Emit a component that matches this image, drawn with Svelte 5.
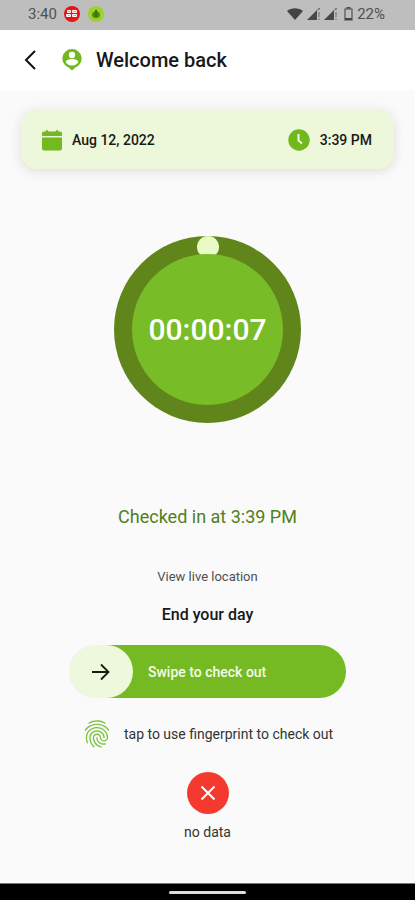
<script>
  const date = 'Aug 12, 2022';
  const time = '3:39 PM';
  const elapsed = '00:00:07';
</script>

<div class="screen">
  <div class="status">
    <span>3:40</span>
    <svg class="news" width="16" height="16" viewBox="0 0 16 16" aria-hidden="true">
      <circle cx="8" cy="8" r="8" fill="#ec1018" />
      <g fill="#fff"><rect x="3" y="4" width="4" height="3" rx="1" /><rect x="8" y="4" width="5" height="3" rx="1" /><rect x="2" y="8" width="5" height="3" rx="1" /><rect x="8" y="8" width="5" height="3" rx="1" /></g>
      <path d="M4 5.5h2M9.5 5.5H12M4 9.5h1.500M9.500 9.500H12" stroke="#ec1018" stroke-width=".5" />
    </svg>
    <svg width="16" height="16" viewBox="0 0 16 16" aria-hidden="true">
      <circle cx="8" cy="8" r="8" fill="#9bd329" />
      <path d="M8 3.200 9.500 6h-3z" fill="#354d18" />
      <ellipse cx="8" cy="8.800" rx="4" ry="3.200" fill="#4d8718" />
      <path d="M8 5v6" stroke="#315d13" />
    </svg>
    <svg class="wifi" width="16" height="12" viewBox="0 0 16 12" aria-hidden="true"><path d="M0 3C4.500-.8 11.500-.8 16 3L8 12z" fill="#444" /></svg>
    {#each [0, 1] as slot (slot)}
      <svg class="signal" width="13" height="13" viewBox="0 0 13 13" aria-hidden="true">
        <path d="M0 13 10 3v10z" fill="#484848" /><path d="M10 3.500 12.500 1M12 1v2m0 2v5m0 1.500V13" fill="none" stroke="#666" />
      </svg>
    {/each}
    <svg class="battery" width="9" height="14" viewBox="0 0 9 14" aria-hidden="true">
      <path d="M3 2V.7h3V2M1 2h7v11H1z" fill="none" stroke="#505050" stroke-width="1.200" /><path d="M1 11h7v2H1z" fill="#444" />
    </svg>
    <span>22%</span>
  </div>

  <header>
    <button class="back" aria-label="Back">
      <svg width="12" height="20" viewBox="0 0 12 20" aria-hidden="true"><path d="M11 1 2 10l9 9" fill="none" stroke="#111" stroke-width="2" /></svg>
    </button>
    <svg width="20" height="22" viewBox="0 0 20 22" aria-hidden="true">
      <path d="M10 0a9.500 9.500 0 0 0-3.400 18.400L10 21.500l3.400-3.100A9.500 9.500 0 0 0 10 0z" fill="#70b91e" />
      <circle cx="10" cy="6" r="3.200" fill="#fff" />
      <path d="M3.800 13.400c0-2.400 3.500-3.400 6.200-3.400s6.200 1 6.200 3.400C14.800 15.500 12.500 16.500 10 16.500s-4.800-1-6.200-3.100z" fill="#fff" />
    </svg>
    <h1>Welcome back</h1>
  </header>

  <main>
    <section class="card">
      <div class="fact">
        <svg width="20" height="22" viewBox="0 0 20 22" aria-hidden="true">
          <path d="M0 7V4.500Q0 2.500 2 2.500h1.500L5 .5l1.500 2h7l1.500-2 1.500 2H18q2 0 2 2V7zM0 8.500h20v11q0 2-2 2H2q-2 0-2-2z" fill="#72ba20" />
        </svg>
        <span>{date}</span>
      </div>
      <div class="fact">
        <svg width="22" height="22" viewBox="0 0 22 22" aria-hidden="true">
          <circle cx="11" cy="11" r="10.700" fill="#70b91d" /><path d="M10.500 5v6.500l3.500 3" fill="none" stroke="#f1fadf" stroke-width="2" />
        </svg>
        <span>{time}</span>
      </div>
    </section>

    <div class="timer">
      <i class="knob"></i>
      <div class="dial">{elapsed}</div>
    </div>

    <p class="checked">Checked in at {time}</p>
    <a class="live" href="#live">View live location</a>
    <h2>End your day</h2>

    <button class="swipe">
      <span class="thumb">
        <svg width="18" height="18" viewBox="0 0 18 18" aria-hidden="true"><path d="M0 9h16.500M9 1.500 16.500 9 9 16.500" fill="none" stroke="#151b10" stroke-width="1.800" /></svg>
      </span>
      <span>Swipe to check out</span>
    </button>

    <button class="finger">
      <svg width="30" height="32" viewBox="1 1 22 22" fill="#7fc242" aria-hidden="true">
        <path d="M17.810 4.470c-.08 0-.16-.02-.23-.06C15.660 3.420 14 3 12.010 3c-1.980 0-3.860.47-5.570 1.410-.24.13-.54.04-.68-.2-.13-.24-.04-.55.2-.68C7.820 2.520 9.860 2 12.010 2c2.130 0 3.990.47 6.030 1.520.25.13.34.43.21.67-.09.18-.26.28-.44.28z" />
        <path d="M3.500 9.720c-.1 0-.2-.03-.29-.09-.23-.16-.28-.47-.12-.7.99-1.400 2.250-2.500 3.750-3.270C9.980 4.040 14 4.030 17.150 5.650c1.500.77 2.760 1.860 3.750 3.250.16.22.11.54-.12.7-.23.16-.54.11-.7-.12-.9-1.260-2.040-2.250-3.390-2.940-2.870-1.470-6.540-1.470-9.400.01-1.360.7-2.500 1.700-3.400 2.960-.08.14-.23.21-.39.21z" />
        <path d="M9.750 21.790c-.13 0-.26-.05-.35-.15-.87-.87-1.340-1.430-2.010-2.640-.69-1.230-1.050-2.730-1.050-4.340 0-2.970 2.540-5.390 5.660-5.390s5.660 2.420 5.660 5.390c0 .28-.22.5-.5.5s-.5-.22-.5-.5c0-2.420-2.090-4.390-4.660-4.390-2.570 0-4.660 1.970-4.660 4.390 0 1.440.32 2.770.93 3.850.64 1.150 1.080 1.640 1.850 2.420.19.2.19.51 0 .71-.11.1-.24.15-.37.15z" />
        <path d="M16.920 19.940c-1.190 0-2.240-.3-3.100-.89-1.490-1.010-2.380-2.650-2.380-4.390 0-.28.22-.5.5-.5s.5.22.5.5c0 1.410.72 2.740 1.940 3.560.71.48 1.540.71 2.540.71.24 0 .64-.03 1.040-.1.27-.05.53.13.58.41.05.27-.13.53-.41.58-.57.11-1.070.12-1.210.12z" />
        <path d="M14.910 22c-.04 0-.09-.01-.13-.02-1.590-.44-2.630-1.030-3.720-2.100-1.400-1.390-2.170-3.240-2.170-5.220 0-1.620 1.380-2.940 3.080-2.940 1.700 0 3.080 1.320 3.080 2.940 0 1.070.93 1.940 2.080 1.940s2.080-.87 2.080-1.940c0-3.770-3.250-6.830-7.250-6.830-2.840 0-5.440 1.580-6.610 4.030-.39.81-.59 1.760-.59 2.800 0 .78.07 2.010.67 3.610.1.26-.03.55-.29.64-.26.1-.55-.04-.64-.29-.49-1.310-.73-2.610-.73-3.960 0-1.200.23-2.290.68-3.240 1.330-2.790 4.280-4.600 7.510-4.600 4.550 0 8.250 3.510 8.250 7.830 0 1.620-1.380 2.940-3.080 2.940s-3.080-1.320-3.080-2.940c0-1.070-.93-1.940-2.080-1.940s-2.080.87-2.080 1.940c0 1.710.66 3.310 1.870 4.510.95.94 1.860 1.460 3.270 1.850.27.07.42.35.35.61-.05.23-.26.38-.47.38z" />
      </svg>
      <span>tap to use fingerprint to check out</span>
    </button>

    <div class="empty">
      <svg width="42" height="42" viewBox="0 0 42 42" aria-hidden="true">
        <circle cx="21" cy="21" r="21" fill="#f43a2e" /><path d="m14.500 14.500 13 13m0-13-13 13" stroke="#fff" stroke-width="2" />
      </svg>
      <p>no data</p>
    </div>
  </main>

  <div class="navbar"><i></i></div>
</div>

<style>
  :global(body) { margin: 0; }
  .screen {
    min-height: 100vh;
    display: flex;
    flex-direction: column;
    background: #fafafa;
    color: #181818;
    font-family: Roboto, "Liberation Sans", sans-serif;
  }
  svg { display: block; flex: none; }
  h1, h2, p { margin: 0; }
  button {
    border: 0;
    padding: 0;
    background: none;
    color: inherit;
    font-family: inherit;
    cursor: pointer;
  }
  .status {
    height: 30px;
    box-sizing: border-box;
    padding: 0 30px 3px 28px;
    display: flex;
    align-items: center;
    background: #bebebe;
    color: #505050;
    font-size: 15px;
    line-height: 20px;
  }
  .news { margin: 0 8px 0 7px; }
  .wifi { margin-left: auto; }
  .signal { margin-left: 4px; }
  .battery { margin: 0 4px 0 7px; }
  header {
    height: 60px;
    padding: 0 24px;
    display: flex;
    align-items: center;
    background: #fff;
  }
  .back { margin-right: 26px; }
  h1 {
    margin-left: 14px;
    font-size: 20px;
    line-height: 24px;
    font-weight: 500;
  }
  main {
    flex: 1;
    padding: 20px 21px;
    display: flex;
    flex-direction: column;
    align-items: center;
  }
  .card {
    align-self: stretch;
    height: 59px;
    padding: 0 22px 0 21px;
    display: flex;
    align-items: center;
    justify-content: space-between;
    border-radius: 16px;
    background: #edf7d9;
    box-shadow: 0 2px 12px rgb(40 40 60 / 14%);
  }
  .fact {
    display: flex;
    align-items: center;
    gap: 10px;
    font-size: 14px;
    line-height: 20px;
    font-weight: 500;
  }
  .timer {
    position: relative;
    width: 187px;
    height: 187px;
    margin-top: 67px;
    display: grid;
    place-items: center;
    border-radius: 50%;
    background: #60861b;
  }
  .knob {
    position: absolute;
    top: 0;
    left: 50%;
    width: 22px;
    height: 22px;
    margin-left: -11px;
    border-radius: 50%;
    background: #e8fbc6;
  }
  .dial {
    position: relative;
    width: 151px;
    height: 151px;
    display: grid;
    place-items: center;
    border-radius: 50%;
    background: #78bc27;
    color: #fff;
    font-size: 30px;
    font-weight: 500;
  }
  .checked {
    margin-top: 82px;
    color: #4f8120;
    font-size: 18px;
    line-height: 24px;
  }
  .live {
    margin-top: 38px;
    color: #505050;
    font-size: 13px;
    line-height: 20px;
    text-decoration: none;
  }
  h2 {
    margin-top: 18px;
    font-size: 16px;
    line-height: 20px;
    font-weight: 500;
  }
  .swipe {
    width: 277px;
    max-width: 100%;
    height: 53px;
    margin-top: 20px;
    display: flex;
    align-items: center;
    gap: 15px;
    border-radius: 27px;
    background: linear-gradient(90deg, #edf8dc 36px, #75ba23 36px);
    color: #f4fbe9;
    font-size: 14px;
    line-height: 20px;
    font-weight: 500;
  }
  .thumb {
    width: 64px;
    height: 53px;
    display: grid;
    place-items: center;
    border-radius: 27px;
    background: #edf8dc;
  }
  .finger {
    margin-top: 20px;
    display: flex;
    align-items: center;
    gap: 12px;
    color: #333;
    font-size: 14px;
    line-height: 20px;
  }
  .empty {
    margin-top: 22px;
    display: flex;
    flex-direction: column;
    align-items: center;
    gap: 8px;
    color: #333;
    font-size: 14px;
    line-height: 20px;
  }
  .navbar {
    height: 16px;
    display: flex;
    align-items: center;
    justify-content: center;
    border-top: 1px solid #777;
    background: #000;
  }
  .navbar i {
    width: 77px;
    height: 3px;
    border-radius: 2px;
    background: #ddd;
  }
</style>
